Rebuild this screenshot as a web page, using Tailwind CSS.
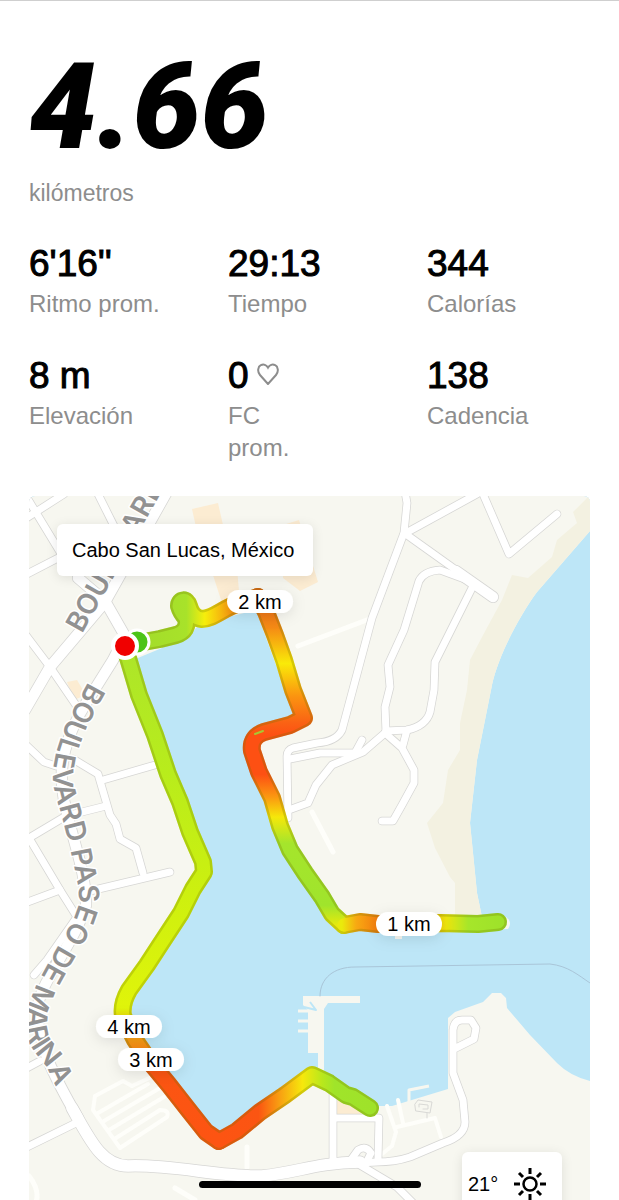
<!DOCTYPE html>
<html lang="es">
<head>
    <meta charset="UTF-8">
    <meta name="viewport" content="width=device-width, initial-scale=1.0">
    <title>Resumen de carrera</title>
    <script src="https://cdn.jsdelivr.net/npm/@tailwindcss/browser@4"></script>
</head>
<body class="bg-white font-['Liberation_Sans',Arial,sans-serif] text-black">
    <main class="relative flex flex-col h-[1200px] overflow-hidden border-t border-[#cfcfcf] px-[29px] pt-12">
        <h1 class="font-['Roboto',sans-serif] font-black italic text-[121px] leading-[116px]">4.66</h1>
        <p class="text-[23px] leading-8 text-[#8d8d8d] mt-3">kilómetros</p>

        <!-- Stats -->
        <dl class="grid grid-cols-3 gap-x-9 gap-y-8 mt-[31px]">
            <div class="flex flex-col">
                <dt class="order-2 text-2xl leading-8 text-[#8d8d8d]">Ritmo prom.</dt>
                <dd class="text-[37px] leading-12 [-webkit-text-stroke:1px_black]">6'16''</dd>
            </div>
            <div class="flex flex-col">
                <dt class="order-2 text-2xl leading-8 text-[#8d8d8d]">Tiempo</dt>
                <dd class="text-[37px] leading-12 [-webkit-text-stroke:1px_black]">29:13</dd>
            </div>
            <div class="flex flex-col">
                <dt class="order-2 text-2xl leading-8 text-[#8d8d8d]">Calorías</dt>
                <dd class="text-[37px] leading-12 [-webkit-text-stroke:1px_black]">344</dd>
            </div>
            <div class="flex flex-col">
                <dt class="order-2 text-2xl leading-8 text-[#8d8d8d]">Elevación</dt>
                <dd class="text-[37px] leading-12 [-webkit-text-stroke:1px_black]">8 m</dd>
            </div>
            <div class="flex flex-col">
                <dt class="order-2 text-2xl leading-8 text-[#8d8d8d]">FC<br>prom.</dt>
                <dd class="flex items-center gap-2 text-[37px] leading-12 [-webkit-text-stroke:1px_black]">0
                    <svg class="w-[22px] h-[22px] mb-1" viewBox="0 0 22 22" fill="none" stroke="#8d8d8d" stroke-width="2" aria-hidden="true">
                        <path d="M11 21 L3 12 C0 8.500 1 3.500 3.800 2.200 C6.500 .8 9.500 1.800 11 4.600 C12.500 1.800 15.500 .8 18.200 2.200 C21 3.500 22 8.500 19 12 Z"/>
                    </svg>
                </dd>
            </div>
            <div class="flex flex-col">
                <dt class="order-2 text-2xl leading-8 text-[#8d8d8d]">Cadencia</dt>
                <dd class="text-[37px] leading-12 [-webkit-text-stroke:1px_black]">138</dd>
            </div>
        </dl>

        <!-- Route map -->
        <section class="relative flex-1 mt-8 rounded-t-md overflow-hidden bg-[#bde6f7]">
            <svg class="absolute inset-0 w-full h-full" viewBox="29 496 561 704" preserveAspectRatio="xMidYMin slice" stroke-linecap="round" stroke-linejoin="round" role="img" aria-label="Mapa del recorrido">
                <defs>
                    <linearGradient id="north" gradientUnits="userSpaceOnUse" x1="140" y1="0" x2="262" y2="0">
                        <stop offset="0" stop-color="#a3dc2a"/><stop offset=".38" stop-color="#a8e22a"/>
                        <stop offset=".53" stop-color="#f6ee0c"/><stop offset=".75" stop-color="#f8960f"/><stop offset="1" stop-color="#e56a12"/>
                    </linearGradient>
                    <linearGradient id="middle" gradientUnits="userSpaceOnUse" x1="0" y1="598" x2="0" y2="925">
                        <stop offset="0" stop-color="#e9661a"/><stop offset=".09" stop-color="#f58a14"/>
                        <stop offset=".2" stop-color="#f9ea08"/><stop offset=".3" stop-color="#fb9410"/>
                        <stop offset=".38" stop-color="#fa6314"/><stop offset=".42" stop-color="#fd5013"/>
                        <stop offset=".54" stop-color="#fd5013"/><stop offset=".61" stop-color="#fb9a10"/>
                        <stop offset=".67" stop-color="#f5e80a"/><stop offset=".75" stop-color="#a5e52c"/>
                        <stop offset=".94" stop-color="#a0e42c"/><stop offset="1" stop-color="#e6ea0c"/>
                    </linearGradient>
                    <linearGradient id="east" gradientUnits="userSpaceOnUse" x1="342" y1="0" x2="500" y2="0">
                        <stop offset="0" stop-color="#eaea0c"/><stop offset=".09" stop-color="#f7a912"/>
                        <stop offset=".22" stop-color="#f6800f"/><stop offset=".45" stop-color="#f6800f"/>
                        <stop offset=".66" stop-color="#eee60c"/><stop offset=".8" stop-color="#a6e62a"/><stop offset="1" stop-color="#9fe22a"/>
                    </linearGradient>
                    <linearGradient id="west" gradientUnits="userSpaceOnUse" x1="0" y1="646" x2="0" y2="1142">
                        <stop offset="0" stop-color="#ace52a"/><stop offset=".25" stop-color="#b8ec1c"/>
                        <stop offset=".5" stop-color="#cdf00f"/><stop offset=".73" stop-color="#e0f40a"/>
                        <stop offset=".79" stop-color="#f7a014"/><stop offset=".86" stop-color="#fb5512"/><stop offset="1" stop-color="#fd5412"/>
                    </linearGradient>
                    <linearGradient id="south" gradientUnits="userSpaceOnUse" x1="219" y1="0" x2="371" y2="0">
                        <stop offset="0" stop-color="#fd5412"/><stop offset=".26" stop-color="#fb5512"/>
                        <stop offset=".4" stop-color="#f8a012"/><stop offset=".55" stop-color="#f6e80c"/>
                        <stop offset=".68" stop-color="#b8e81c"/><stop offset=".76" stop-color="#a0e42a"/><stop offset="1" stop-color="#9fe22a"/>
                    </linearGradient>
                    <filter id="soft" x="-30%" y="-60%" width="160%" height="240%">
                        <feDropShadow dx="0" dy="3" stdDeviation="7" flood-color="#000" flood-opacity=".1"/>
                    </filter>
                    <path id="label-north" d="M82 634 L166 484"/>
                    <path id="label-west" d="M88 682 C82 694 70 714 65 727 C58 744 53 760 53 778 C54 794 59 805 62 817 L72 857 C75 872 79 886 79 900 C78 916 62 939 54 953 C46 967 36 984 31 998 C26 1013 25 1030 30 1044 C36 1056 43 1060 48 1070 L64 1104"/>

                    <g id="wide-roads">
                        <path d="M168 490 L105 602 L50 667 L25 710"/>
                        <path d="M78 578 L105 601 L125 636 L113 660 L88 700 C66 735 57 765 64 800 C72 840 86 870 86 905 C76 940 42 980 38 1005 C34 1040 56 1080 78 1118"/>
                    </g>
                    <path id="boulevard" d="M72 1108 C90 1140 102 1166 128 1166 C170 1164 220 1177 262 1176 C300 1172 315 1163 360 1162"/>
                    <g id="roads">
                        <path d="M404 486 L407 503 L404 533 L372 618 L342 730 C338 738 330 742 317 743 L293 748 Q287 750 287 756 L288 818"/>
                        <path d="M290 759 L320 753 L355 753 L362 740"/>
                        <path d="M404 534 L477 494"/>
                        <path d="M483 494 L509 554 L557 514"/>
                        <path d="M470 581 L440 570 Q424 571 419 581 L404 630 L388 665 L390 687 L385 707 L386 732"/>
                        <path d="M472 588 L435 662 L434 690 L430 712 Q426 726 407 730 L386 731"/>
                        <path d="M407 730 L403 745"/>
                        <path d="M385 733 L402 748 L414 770 L414 783 L402 805 L393 821 L382 821"/>
                        <path d="M385 733 L363 752 L332 765 L316 785 L308 803 L286 811"/>
                        <path d="M25 519 L64 494"/>
                        <path d="M26 496 L60 552"/>
                        <path d="M98 494 L114 526"/>
                        <path d="M25 575 L62 556"/>
                        <path d="M25 634 L50 667 L78 708"/>
                        <path d="M25 744 L44 762 L56 766"/>
                        <path d="M73 759 L98 774 L110 815 L116 824 L120 839 L136 848 L143 873"/>
                        <path d="M103 780 L155 765"/>
                        <path d="M106 806 L66 816 L29 838 L60 890 L77 917 L47 960 L34 975"/>
                        <path d="M25 903 L60 890"/>
                        <path d="M170 872 L90 891"/>
                        <path d="M25 1148 L78 1122"/>
                        <path d="M25 1069 L40 1061"/>
                        <path d="M333 1090 L333 1165"/>
                        <path d="M335 1118 L379 1118 L378 1160"/>
                        <path d="M348 1164 L358 1150 Q366 1145 371 1153 L366 1163"/>
                        <path d="M360 1165 L397 1187 L414 1204"/>
                        <path d="M340 1164 L377 1162 Q395 1162 410 1157 L443 1143 Q465 1136 465 1122 L463 1100 L453 1073 L453 1030 Q454 1020 462 1020 L471 1020 L476 1028 L474 1039 L456 1048"/>
                    </g>

                    <path id="r-north" d="M138 643 L160 639 L176 635 Q189 631 186 618 Q181 613 179 606 C179 599 187 598 189 606 Q192 618 202 619 C214 619 224 607 240 603 L258 597"/>
                    <path id="r-middle" d="M258 597 L266 612 L275 635 L284 660 L293 690 L304 718 L290 725 L264 732 Q250 737 252 751 L259 772 L272 798 L280 826 L290 850 L305 873 L322 897 L332 914 L344 925"/>
                    <path id="r-east" d="M344 925 L360 922 L378 924 L440 923 L478 924 L498 922"/>
                    <path id="r-west" d="M125 648 L131 668 L139 695 L155 735 L168 774 L180 802 L190 832 L203 862 L204 872 L193 889 L181 913 L160 945 L147 965 L129 990 Q121 1004 123 1016 L135 1040 L150 1062 L169 1085 L187 1108 L206 1132 L219 1141"/>
                    <path id="r-south" d="M219 1141 L237 1131 L260 1112 L285 1095 L312 1075 L329 1083 L346 1095 L353 1097 L370 1108"/>
                </defs>

                <!-- Water and land -->
                <path fill="#bde6f7" d="M29 496H590V1200H29Z"/>
                <path fill="#f7f7f0" d="M29 496H590V531L537 592C518 618 498 657 492 685L483 730L477 760L470 823L477 893L482 917H506Q513 922 508 929L402 931V939H395V931L345 931L330 918L284 850L248 750L254 738L296 720L256 610L200 624L186 638L133 660L207 872L122 1012L220 1138L312 1070H318V1053H308V1010L303 1005V996H360V1003H328L324 1009V1074L372 1106L392 1106L448 1089V1018L455 1012L483 1002L492 993H501L506 998L507 1008L530 1035L557 1063Q570 1076 590 1081V1200H29Z"/>
                <path fill="#f3f1e1" d="M590 496L587 498L573 512L577 523L557 540L552 557L528 578L512 575L502 600L482 637L470 660L467 690L460 723V750L448 770L443 803L427 823L435 848L450 877L455 883V917H482L477 893L470 823L477 760L483 730L492 685C498 657 518 618 537 592L590 531Z"/>
                <path fill="#fcecd2" d="M192 509L218 503L223 525L235 545L240 603L222 603L212 572L200 545ZM283 525L299 520L318 582L300 591L283 578ZM67 682L77 680L86 695L74 700ZM337 1096L371 1112L370 1115H337Z"/>
                <path fill="none" stroke="#a9c5d8" stroke-width="1" d="M320 996 C320 978 334 967 355 967 L550 964 C568 966 578 975 590 983"/>
                <g fill="none" stroke="#f7f7f0" stroke-width="3" stroke-linecap="butt">
                    <path d="M298 1011H310M298 1021H310M298 1031H310M409 1103V1090L429 1086"/>
                    <path stroke="#bde6f7" stroke-width="2" d="M304 1007L316 1010L310 1002"/>
                </g>

                <!-- Footpaths and parking -->
                <g fill="none" stroke="#fefefa" stroke-width="5">
                    <path d="M298 646L372 618M312 812L333 852M247 1147V1167M29 1176Q40 1190 36 1202M175 1188L195 1200"/>
                    <path stroke-width="4" d="M387 1106L396 1132L392 1146L382 1154M398 1100L403 1123M397 1127L435 1118L441 1137"/>
                    <path stroke-width="4" d="M93 1110L95 1096L123 1081L132 1086L158 1074M93 1110L120 1148L167 1117Q170 1110 160 1110L116 1138M98 1113L148 1084M104 1121L160 1088M109 1130L164 1097"/>
                </g>
                <path fill="none" stroke="#d9d9d6" stroke-width="1" d="M415 1104L418 1100L432 1102L430 1113L416 1111ZM419 1107V1104L428 1105V1109L423 1109M427 1113V1118"/>

                <!-- Streets: casing first, then fill -->
                <g fill="none" stroke="#d6d6d4">
                    <use href="#roads" stroke-width="8.500"/>
                    <use href="#wide-roads" stroke-width="12"/>
                    <use href="#boulevard" stroke-width="13"/>
                    <path stroke-width="12" d="M456 571L493 597"/>
                    <path stroke-width="8.500" d="M407 535L470 580"/>
                </g>
                <g fill="none" stroke="#fff">
                    <use href="#roads" stroke-width="7"/>
                    <use href="#wide-roads" stroke-width="10.500"/>
                    <use href="#boulevard" stroke-width="11.500"/>
                    <path stroke-width="10.500" d="M456 571L493 597"/>
                    <path stroke-width="7" d="M407 535L470 580"/>
                </g>

                <!-- Street names -->
                <g class="font-['Inter',sans-serif] font-semibold" font-size="28" fill="#929292" stroke="#fff" stroke-width="3" paint-order="stroke">
                    <text><textPath href="#label-north">BOULEVARD</textPath></text>
                    <text><textPath href="#label-west">BOULEVARD PASEO DE MARINA</textPath></text>
                </g>

                <!-- Route -->
                <g fill="none">
                    <g stroke-width="18">
                        <use href="#r-north" stroke="url(#north)"/>
                        <use href="#r-middle" stroke="url(#middle)"/>
                        <use href="#r-east" stroke="url(#east)"/>
                        <use href="#r-west" stroke="url(#west)"/>
                        <use href="#r-south" stroke="url(#south)"/>
                    </g>
                    <g stroke="#6c7000" stroke-width="18" opacity=".25">
                        <use href="#r-north"/><use href="#r-middle"/><use href="#r-east"/><use href="#r-west"/><use href="#r-south"/>
                    </g>
                    <g stroke-width="13">
                        <use href="#r-north" stroke="url(#north)"/>
                        <use href="#r-middle" stroke="url(#middle)"/>
                        <use href="#r-east" stroke="url(#east)"/>
                        <use href="#r-west" stroke="url(#west)"/>
                        <use href="#r-south" stroke="url(#south)"/>
                    </g>
                    <path stroke="#a8c832" stroke-width="2" d="M255 734L263 731"/>
                </g>
                <circle cx="137" cy="642" r="12" fill="#4cc417" stroke="#fff" stroke-width="3"/>
                <circle cx="125" cy="646" r="12" fill="#f00000" stroke="#fff" stroke-width="4"/>

                <!-- Kilometre markers -->
                <g fill="#fff" filter="url(#soft)">
                    <rect x="227" y="590" width="66" height="23" rx="11.500"/>
                    <rect x="376" y="912" width="66" height="24" rx="12"/>
                    <rect x="96" y="1015" width="66" height="23" rx="11.500"/>
                    <rect x="118" y="1048" width="66" height="23" rx="11.500"/>
                </g>
                <g font-size="20" text-anchor="middle">
                    <text x="260" y="609">2 km</text>
                    <text x="409" y="931">1 km</text>
                    <text x="129" y="1034">4 km</text>
                    <text x="151" y="1067">3 km</text>
                </g>
            </svg>

            <p class="absolute left-7 top-7 w-64 rounded-md bg-white px-[15px] py-3 text-[20px] leading-7 shadow-[0_2px_12px_rgba(0,0,0,0.1)]">Cabo San Lucas, México</p>

            <div class="absolute right-7 -bottom-4 flex h-16 w-[100px] items-center justify-between rounded-md bg-white pl-[6px] pr-4 text-[20px] shadow-[0_2px_12px_rgba(0,0,0,0.1)]">
                21°
                <svg class="w-8 h-8" viewBox="0 0 32 32" fill="none" stroke="#000" stroke-width="3" aria-hidden="true">
                    <circle cx="16" cy="16" r="6.500" stroke-width="2.500"/>
                    <path d="M16 0V6M16 26V32M0 16H6M26 16H32M5 5L9 9M23 23L27 27M5 27L9 23M23 9L27 5"/>
                </svg>
            </div>
        </section>

        <div class="absolute bottom-3 left-1/2 h-[7px] w-[222px] -translate-x-1/2 rounded-full bg-black"></div>
    </main>
</body>
</html>
